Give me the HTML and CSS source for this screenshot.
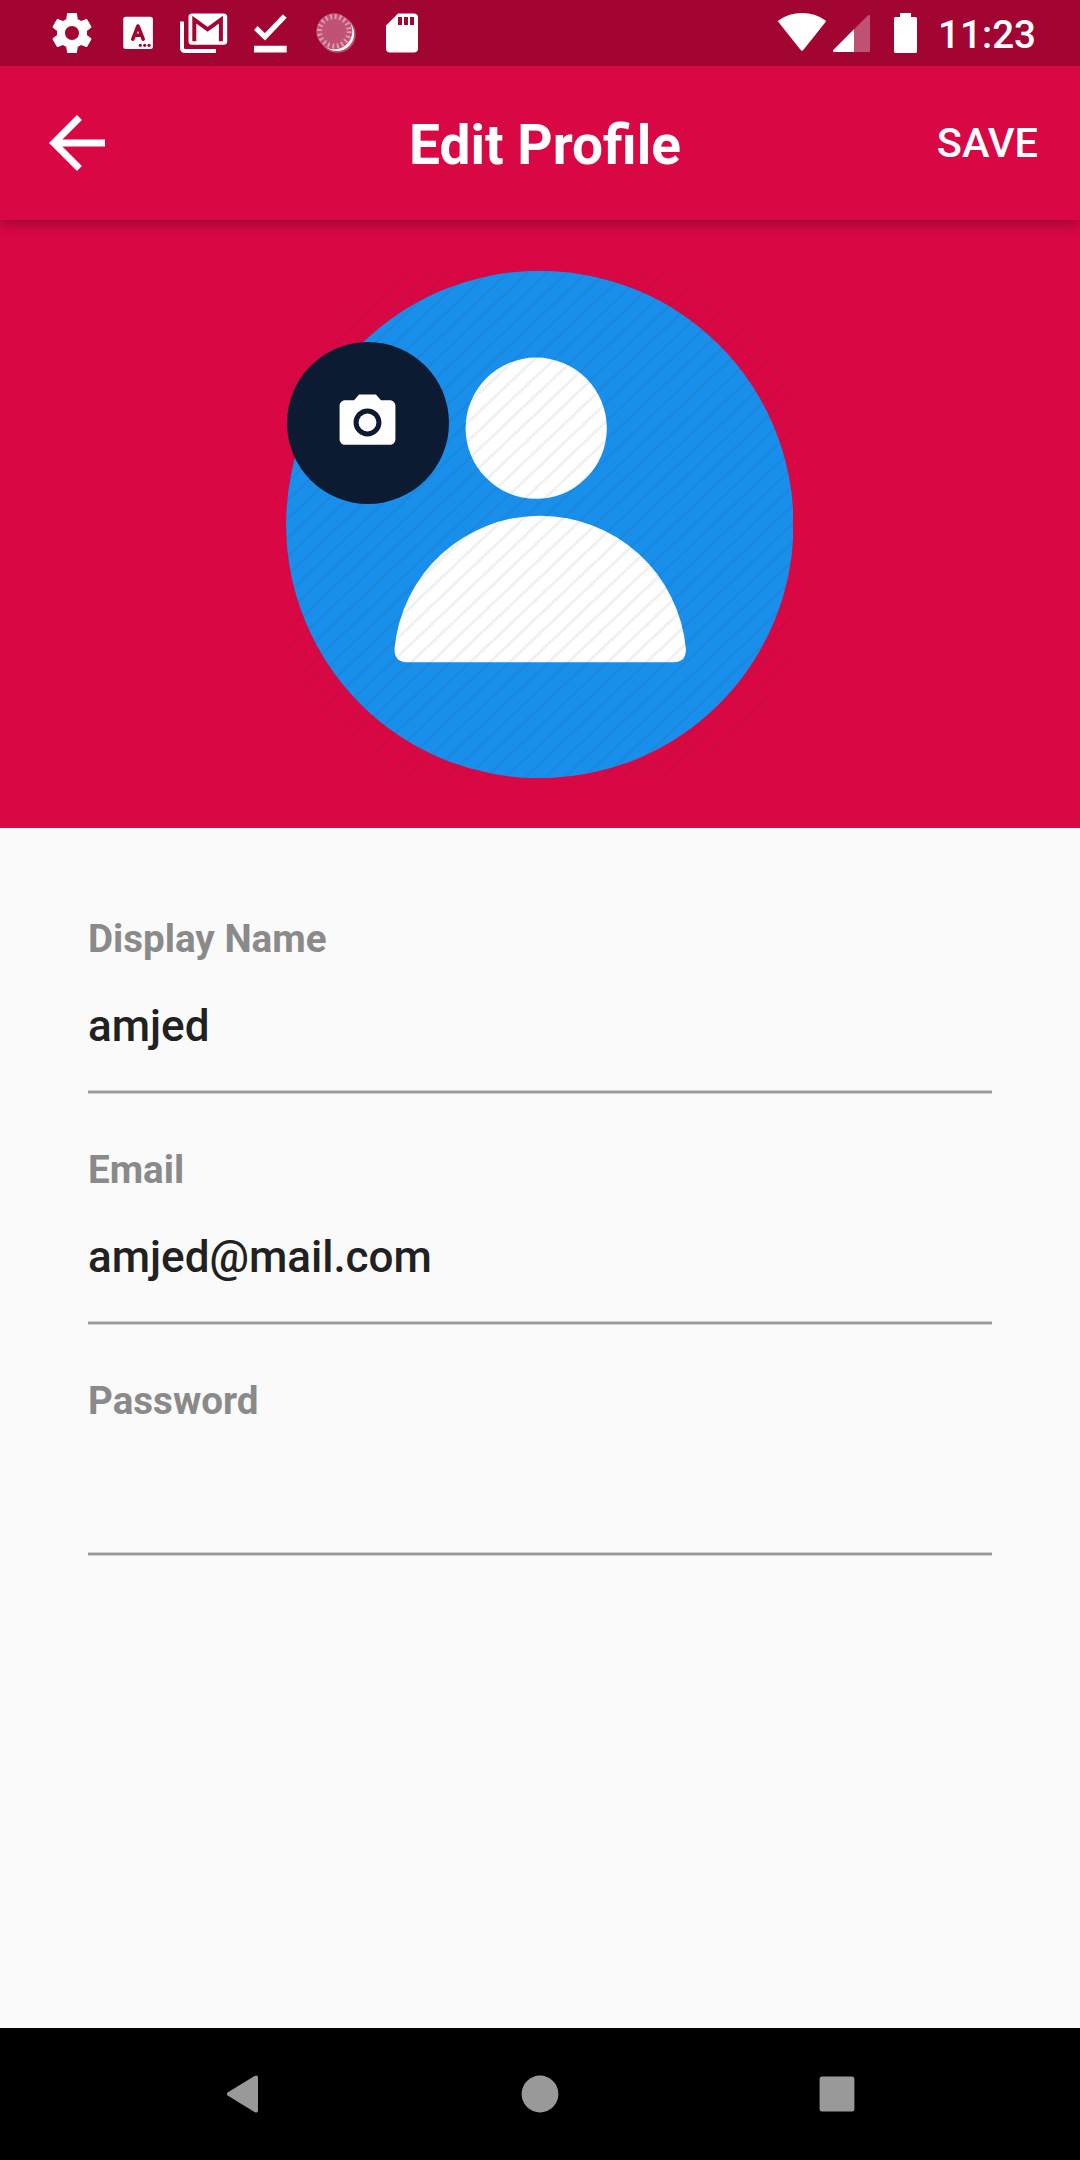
FILE: index.html
```html
<!DOCTYPE html>
<html lang="en">
<head>
<meta charset="utf-8">
<title>Edit Profile</title>
<link rel="stylesheet" href="styles.css">
</head>
<body>
<div class="screen">
  <div class="status-bar">
    <div class="status-icons">
      <svg class="status-icon" viewBox="0 0 24 24"><path fill="#fff" d="M19.43 12.98c.04-.32.07-.64.07-.98s-.03-.66-.07-.98l2.11-1.65c.19-.15.24-.42.12-.64l-2-3.46c-.12-.22-.39-.3-.61-.22l-2.49 1c-.52-.4-1.08-.73-1.69-.98l-.38-2.65C14.46 2.18 14.25 2 14 2h-4c-.25 0-.46.18-.49.42l-.38 2.65c-.61.25-1.17.59-1.69.98l-2.49-1c-.23-.09-.49 0-.61.22l-2 3.46c-.13.22-.07.49.12.64l2.11 1.65c-.04.32-.07.65-.07.98s.03.66.07.98l-2.11 1.65c-.19.15-.24.42-.12.64l2 3.46c.12.22.39.3.61.22l2.49-1c.52.4 1.08.73 1.69.98l.38 2.65c.03.24.24.42.49.42h4c.25 0 .46-.18.49-.42l.38-2.65c.61-.25 1.17-.59 1.69-.98l2.49 1c.23.09.49 0 .61-.22l2-3.46c.12-.22.07-.49-.12-.64l-2.11-1.65zM12 15.5c-1.93 0-3.5-1.57-3.5-3.5s1.57-3.5 3.5-3.5 3.5 1.57 3.5 3.5-1.57 3.5-3.5 3.5z"/></svg>
      <svg class="status-icon" viewBox="0 0 48 48"><rect x="9.3" y="7.7" width="29.6" height="32.4" rx="2.5" fill="#fff"/><path d="M18.800 30.200L24 17l5.200 13.200M20.500 26.300h7" fill="none" stroke="#a30532" stroke-width="3.600" stroke-linecap="round" stroke-linejoin="round"/><g fill="#a30532"><circle cx="26.300" cy="36.300" r="1.600"/><circle cx="30.700" cy="36.300" r="1.600"/><circle cx="35.100" cy="36.300" r="1.600"/></g></svg>
      <svg class="status-icon" viewBox="0 0 48 48"><path d="M2 12.500v26.200q0 3.300 3.300 3.300H36" fill="none" stroke="#fff" stroke-width="4"/><rect x="8.500" y="4.500" width="38.700" height="31.200" rx="3.500" fill="#fff"/><path d="M14.300 32.200V10.600L27.600 20.300L40.900 10.600V32.200" fill="none" stroke="#a30532" stroke-width="4"/></svg>
      <svg class="status-icon" viewBox="0 0 48 48"><path d="M9.800 19l9.200 8.800L38.800 7" fill="none" stroke="#fff" stroke-width="5.200"/><path d="M8 36.700h32.700v6.800H8z" fill="#fff"/></svg>
      <svg class="status-icon" viewBox="0 0 48 48"><circle cx="25.500" cy="25.500" r="18.300" fill="#fff" opacity=".3"/><circle cx="24.800" cy="24.800" r="17.300" fill="#fff"/><circle cx="22.300" cy="22.300" r="18" fill="#c05275"/><circle cx="22.300" cy="22.300" r="14.800" fill="none" stroke="#dc9db1" stroke-width="5" stroke-dasharray="1.900 2.750"/></svg>
      <svg class="status-icon" viewBox="0 0 24 24"><path fill="#fff" d="M18 2.200h-8L4 8.200V20c0 1.100.9 1.800 2 1.800h12c1.100 0 2-.7 2-1.800V4c0-1.100-.9-1.800-2-1.800zM12 8h-2V4h2v4zm3 0h-2V4h2v4zm3 0h-2V4h2v4z"/></svg>
    </div>
    <div class="system-icons">
      <svg class="wifi" viewBox="0 0 48 38"><path fill="#fff" d="M.6 9.200Q-.4 8.200.8 7.200Q11 0 24 0T47.200 7.200Q48.400 8.200 47.400 9.200L25.500 36.800Q24 38.600 22.500 36.800z"/></svg>
      <svg class="signal" viewBox="0 0 37 37"><path fill="#bf5273" d="M1.300 37Q-.8 36.500.6 34.800L34.800.5Q37-.8 37 1.800V35.500Q37 37 35.500 37z"/><path fill="#fff" d="M1.300 37Q-.8 36.500.6 34.800L21 14.300V37z"/></svg>
      <svg class="battery" viewBox="0 0 23 40"><path fill="#fff" d="M6 0h11v4h4.500Q23 4 23 5.500v33Q23 40 21.500 40h-20Q0 40 0 38.500v-33Q0 4 1.500 4H6z"/></svg>
      <span class="clock">11:23</span>
    </div>
  </div>

  <header class="app-bar">
    <svg class="back" viewBox="0 0 24 24"><path fill="#fff" d="M20 11H7.830l5.590-5.590L12 4l-8 8 8 8 1.410-1.410L7.830 13H20v-2z"/></svg>
    <h1 class="title">Edit Profile</h1>
    <span class="save">SAVE</span>
  </header>

  <section class="hero">
    <div class="avatar">
      <svg class="avatar-art" viewBox="0 0 507 507">
        <defs>
          <pattern id="stripes" width="60" height="13.500" patternUnits="userSpaceOnUse" patternTransform="translate(124 390.500) rotate(-43.500)">
            <rect y="0" width="60" height="3" fill="#333" fill-opacity=".065"/>
          </pattern>
        </defs>
        <circle cx="253.800" cy="253.500" r="253.700" fill="#198fec"/>
        <circle cx="250.200" cy="157.200" r="70.600" fill="#fff"/>
        <path fill="#fff" d="M108.500 378A146.300 146.300 0 0 1 254.200 244.700A146.300 146.300 0 0 1 399.900 378Q400 391 388 391.200H120.500Q108.400 391 108.500 378z"/>
        <circle cx="253.500" cy="253.500" r="286" fill="url(#stripes)"/>
      </svg>
      <div class="camera-button">
        <svg class="camera-icon" viewBox="0 0 24 24"><g fill="#fff"><circle cx="12" cy="12" r="3.200"/><path d="M9 2L7.170 4H4c-1.100 0-2 .9-2 2v12c0 1.100.9 2 2 2h16c1.100 0 2-.9 2-2V6c0-1.100-.9-2-2-2h-3.170L15 2H9zm3 15c-2.760 0-5-2.240-5-5s2.240-5 5-5 5 2.240 5 5-2.240 5-5 5z"/></g></svg>
      </div>
    </div>
  </section>

  <main class="form">
    <div class="field"><div class="label">Display Name</div><div class="value">amjed</div></div>
    <div class="field"><div class="label">Email</div><div class="value">amjed@mail.com</div></div>
    <div class="field"><div class="label">Password</div><div class="value"></div></div>
  </main>

  <nav class="nav-bar">
    <svg class="nav-icon" viewBox="0 0 48 48"><path fill="#999" d="M8.600 25.600Q7 24 8.600 22.400L35.500 6Q39 4.300 39 7.500V40.500Q39 43.700 35.500 42z"/></svg>
    <svg class="nav-icon" viewBox="0 0 48 48"><circle cx="24" cy="24" r="18.400" fill="#999"/></svg>
    <svg class="nav-icon" viewBox="0 0 48 48"><rect x="6.600" y="6.600" width="34.800" height="34.800" rx="2.500" fill="#999"/></svg>
  </nav>
</div>
</body>
</html>
```
FILE: styles.css
```css
* { box-sizing: border-box; }
body { margin: 0; font-family: Roboto, "Liberation Sans", sans-serif; background: #fafafa; }
svg { display: block; flex: none; }
.screen { width: 1080px; height: 2160px; display: flex; flex-direction: column; overflow: hidden; }

.status-bar { position: relative; z-index: 2; height: 66px; flex: none; background: #a30532; display: flex; justify-content: space-between; align-items: center; padding: 0 44px 0 48px; }
.status-icons { display: flex; gap: 18px; }
.status-icon { width: 48px; height: 48px; }
.system-icons { display: flex; align-items: center; }
.wifi { width: 48px; height: 38px; margin: 0 7px 2px 0; }
.signal { width: 37px; height: 37px; margin-right: 24px; }
.battery { width: 23px; height: 40px; margin-right: 21px; }
.clock { color: #fff; font-size: 38.6px; font-weight: 500; line-height: 46px; padding-top: 3px; }

.app-bar { position: relative; height: 154px; flex: none; background: #da0745; display: grid; grid-template-columns: 1fr auto 1fr; align-items: center; padding: 0 42px 0 35px; color: #fff; box-shadow: 0 4px 14px rgba(0, 0, 0, .3); z-index: 1; }
.back { width: 84px; height: 84px; }
.title { margin: 0; padding: 4px 0 0 17px; font-size: 55px; line-height: 66px; font-weight: 700; }
.save { justify-self: end; font-size: 41.5px; line-height: 48px; font-weight: 500; }

.hero { height: 608px; flex: none; background: #da0745; display: flex; justify-content: center; align-items: center; }
.avatar { position: relative; width: 508px; height: 507px; }
.avatar-art { width: 507px; height: 507px; overflow: hidden; }
.camera-button { position: absolute; left: 0.6px; top: 71px; width: 162px; height: 162px; border-radius: 50%; background: #0c1b31; display: flex; align-items: center; justify-content: center; }
.camera-icon { width: 67px; height: 67px; }

.form { flex: 1; padding: 63px 88px 0; }
.field { height: 231px; padding-top: 25px; background: linear-gradient(#d0d0d0 1px, #999 1px, #999 3px, #d0d0d0 3px) 0 199px / 100% 4px no-repeat; }
.label { font-size: 38.6px; line-height: 46px; font-weight: 700; color: #8a8a8a; }
.value { margin-top: 38px; font-size: 44px; line-height: 53px; height: 53px; font-weight: 500; color: #212121; }

.nav-bar { height: 132px; flex: none; background: #000; display: flex; justify-content: space-between; align-items: center; padding: 0 219px; }
.nav-icon { width: 48px; height: 48px; }
```
